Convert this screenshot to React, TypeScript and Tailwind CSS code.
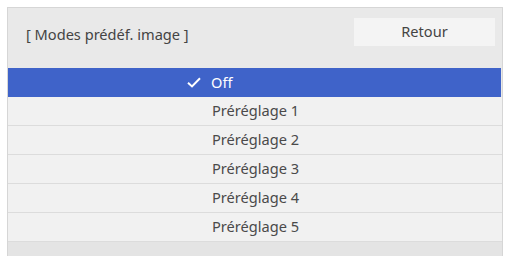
import React from "react";

const items = ["Préréglage 1", "Préréglage 2", "Préréglage 3", "Préréglage 4", "Préréglage 5"];

export default function App() {
  return (
    <div className="w-[506px] h-[256px] bg-white pt-[7px] pl-[7px] pr-[3px] overflow-hidden" style={{ fontFamily: '"Noto Sans", "Open Sans", sans-serif' }}>
      <div className="h-[249px] border-l border-t border-r border-[#d6d6d6] bg-[#e9e9e9] flex flex-col">
        <div className="h-[60px] flex items-center justify-between pl-[18px] pr-[7px] shrink-0">
          <span className="text-[14.6px] text-[#444] -mt-[6px]">[ Modes prédéf. image ]</span>
          <div className="w-[141px] h-[28px] bg-[#f4f4f4] flex items-center justify-center text-[14.6px] text-[#444] -mt-[12px]">Retour</div>
        </div>
        <div className="h-[29px] bg-[#3f63c9] flex items-center text-white text-[14.6px] shrink-0 mr-[1px]">
          <div className="w-[203px] flex justify-end pr-[10px]">
            <svg width="14" height="11" viewBox="0 0 14 11" fill="none">
              <path d="M1 5.8 L5 9.4 L13 1.2" stroke="white" strokeWidth="2" />
            </svg>
          </div>
          <span>Off</span>
        </div>
        {items.map((t) => (
          <div key={t} className="h-[29px] bg-[#f1f1f1] border-b border-[#dcdcdc] flex items-center text-[14.6px] text-[#4a4a4a] shrink-0 first:h-[30px]">
            <span className="pl-[204px]">{t}</span>
          </div>
        ))}
        <div className="flex-1 bg-[#e4e4e4]" />
      </div>
    </div>
  );
}
